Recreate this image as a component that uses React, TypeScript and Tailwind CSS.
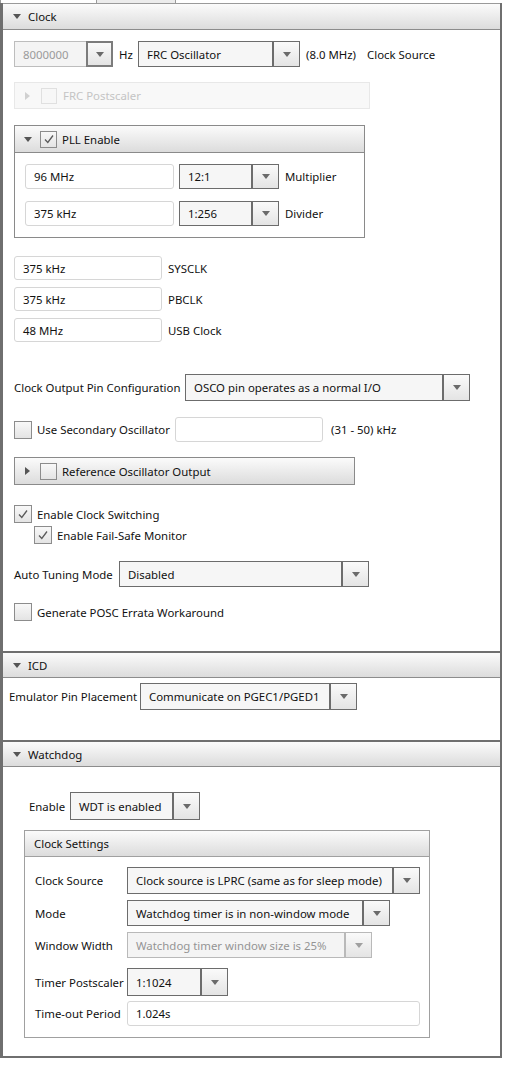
import React from "react";

function DownTri({ color = "#555" }: { color?: string }) {
  return (
    <svg width="8" height="5" viewBox="0 0 8 5">
      <polygon points="0,0 8,0 4,5" fill={color} />
    </svg>
  );
}

function RightTri({ color = "#555" }: { color?: string }) {
  return (
    <svg width="5" height="8" viewBox="0 0 5 8">
      <polygon points="0,0 5,4 0,8" fill={color} />
    </svg>
  );
}

function Check() {
  return (
    <svg width="14" height="14" viewBox="0 0 14 14">
      <path d="M3 7.5 L5.8 10.5 L11 3.5" stroke="#5a5a5a" strokeWidth="1.3" fill="none" />
    </svg>
  );
}

function CheckBox({ checked, size = "w-[18px] h-[18px]" }: { checked?: boolean; size?: string }) {
  return (
    <div className={`${size} shrink-0 border border-[#8c8c8c] bg-linear-to-b from-[#f8f8f8] to-[#e4e4e4] flex items-center justify-center`}>
      {checked && <Check />}
    </div>
  );
}

function Select({
  value,
  w,
  h = "h-[26px]",
  disabled,
}: {
  value: string;
  w: string;
  h?: string;
  disabled?: boolean;
}) {
  return (
    <div
      className={`${w} ${h} shrink-0 flex border ${
        disabled ? "border-[#b9b9b9] bg-[#f4f4f4] text-[#949494]" : "border-[#6c6c6c] bg-[#f6f6f6]"
      }`}
    >
      <div className="flex-1 flex items-center px-[8px] whitespace-nowrap overflow-hidden">{value}</div>
      <div
        className={`w-[27px] shrink-0 border-l-2 ${
          disabled ? "border-[#b9b9b9]" : "border-[#6c6c6c]"
        } bg-linear-to-b from-[#fafafa] to-[#e4e4e4] flex items-center justify-center`}
      >
        <DownTri color={disabled ? "#a0a0a0" : "#6a6a6a"} />
      </div>
    </div>
  );
}

function LockedCombo({ value, w }: { value: string; w: string }) {
  return (
    <div className={`${w} h-[26px] shrink-0 flex border border-[#bdbdbd] bg-[#f4f4f4]`}>
      <div className="flex-1 flex items-center px-[8px] text-[#9a9a9a]">{value}</div>
      <div className="w-[27px] shrink-0 border-2 border-[#7c7c7c] -m-px bg-linear-to-b from-[#fafafa] to-[#e4e4e4] flex items-center justify-center">
        <DownTri color="#6a6a6a" />
      </div>
    </div>
  );
}

function TextBox({ value, w, h = "h-[24px]" }: { value: string; w: string; h?: string }) {
  return (
    <div className={`${w} ${h} shrink-0 border border-[#d6d6d6] rounded-[3px] bg-white flex items-center px-[8px]`}>
      {value}
    </div>
  );
}

function SectionHeader({ title, thick }: { title: string; thick?: boolean }) {
  return (
    <div
      className={`h-[27px] shrink-0 flex items-center ${
        thick ? "border-t-2 border-t-[#6f6f6f]" : "border-t border-t-[#9a9a9a]"
      } border-b border-b-[#8c8c8c] bg-linear-to-b from-[#fbfbfb] to-[#dcdcdc]`}
    >
      <div className="ml-[10px] w-[12px] flex items-center">
        <DownTri />
      </div>
      <span className="ml-[3px]">{title}</span>
    </div>
  );
}

export default function App() {
  return (
    <div className="w-[506px] h-[1065px] overflow-hidden bg-white text-[11.4px] leading-[15px] text-[#111111] font-['Noto_Sans','Open_Sans',sans-serif]">
      {/* tab strip */}
      <div className="h-[3px] flex">
        <div className="w-[97px] border-x border-[#9a9a9a] bg-white" />
        <div className="w-[79px] border-r border-[#9a9a9a] bg-[#ececec]" />
      </div>

      <div className="w-[502px] h-[1055px] flex flex-col border-l-[3px] border-r-2 border-b-2 border-[#6f6f6f]">
        {/* Clock */}
        <SectionHeader title="Clock" />
        <div className="pl-[11px] pt-[11px] pb-[30px] flex flex-col">
          <div className="h-[26px] flex items-center">
            <LockedCombo value="8000000" w="w-[99px]" />
            <span className="ml-[6px] w-[13px]">Hz</span>
            <div className="ml-[6px]">
              <Select value="FRC Oscillator" w="w-[162px]" />
            </div>
            <span className="ml-[6px] w-[55px] whitespace-nowrap">(8.0 MHz)</span>
            <span className="ml-[6px] whitespace-nowrap">Clock Source</span>
          </div>

          <div className="mt-[15px] w-[356px] h-[27px] border border-[#e8e8e8] bg-[#f8f8f8] flex items-center">
            <div className="ml-[10px] w-[16px]">
              <RightTri color="#d0d0d0" />
            </div>
            <div className="w-[16px] h-[16px] border border-[#e0e0e0] bg-[#f7f7f7]" />
            <span className="ml-[6px] text-[#c4c4c4]">FRC Postscaler</span>
          </div>

          <div className="mt-[16px] w-[351px] border border-[#8a8a8a]">
            <div className="h-[27px] flex items-center border-b border-[#8a8a8a] bg-linear-to-b from-[#fbfbfb] to-[#dcdcdc]">
              <div className="ml-[9px] w-[16px]">
                <DownTri />
              </div>
              <CheckBox checked size="w-[17px] h-[17px]" />
              <span className="ml-[5px]">PLL Enable</span>
            </div>
            <div className="px-[10px] pt-[11px] pb-[11px] flex flex-col gap-[12px]">
              <div className="flex items-center">
                <TextBox value="96 MHz" w="w-[149px]" h="h-[25px]" />
                <div className="ml-[5px]">
                  <Select value="12:1" w="w-[100px]" h="h-[25px]" />
                </div>
                <span className="ml-[6px]">Multiplier</span>
              </div>
              <div className="flex items-center">
                <TextBox value="375 kHz" w="w-[149px]" h="h-[25px]" />
                <div className="ml-[5px]">
                  <Select value="1:256" w="w-[100px]" h="h-[25px]" />
                </div>
                <span className="ml-[6px]">Divider</span>
              </div>
            </div>
          </div>

          <div className="mt-[18px] flex flex-col gap-[7px]">
            {[
              ["375 kHz", "SYSCLK"],
              ["375 kHz", "PBCLK"],
              ["48 MHz", "USB Clock"],
            ].map(([v, l]) => (
              <div key={l} className="flex items-center">
                <TextBox value={v} w="w-[148px]" />
                <span className="ml-[6px]">{l}</span>
              </div>
            ))}
          </div>

          <div className="mt-[32px] flex items-center">
            <span className="w-[171px] whitespace-nowrap">Clock Output Pin Configuration</span>
            <Select value="OSCO pin operates as a normal I/O" w="w-[285px]" h="h-[27px]" />
          </div>

          <div className="mt-[16px] h-[25px] flex items-center">
            <CheckBox />
            <span className="ml-[5px] w-[138px] whitespace-nowrap">Use Secondary Oscillator</span>
            <TextBox value="" w="w-[148px]" h="h-[25px]" />
            <span className="ml-[8px]">(31 - 50) kHz</span>
          </div>

          <div className="mt-[15px] w-[341px] h-[28px] border border-[#8a8a8a] bg-linear-to-b from-[#fbfbfb] to-[#dcdcdc] flex items-center">
            <div className="ml-[10px] w-[15px]">
              <RightTri />
            </div>
            <CheckBox size="w-[17px] h-[17px]" />
            <span className="ml-[5px]">Reference Oscillator Output</span>
          </div>

          <div className="mt-[20px] flex items-center">
            <CheckBox checked />
            <span className="ml-[5px]">Enable Clock Switching</span>
          </div>
          <div className="mt-[3px] ml-[20px] flex items-center">
            <CheckBox checked />
            <span className="ml-[5px]">Enable Fail-Safe Monitor</span>
          </div>

          <div className="mt-[17px] flex items-center">
            <span className="w-[105px] whitespace-nowrap">Auto Tuning Mode</span>
            <Select value="Disabled" w="w-[250px]" />
          </div>

          <div className="mt-[16px] flex items-center">
            <CheckBox />
            <span className="ml-[5px]">Generate POSC Errata Workaround</span>
          </div>
        </div>

        {/* ICD */}
        <SectionHeader title="ICD" thick />
        <div className="pl-[6px] pt-[5px] pb-[30px]">
          <div className="flex items-center">
            <span className="w-[131px] whitespace-nowrap">Emulator Pin Placement</span>
            <Select value="Communicate on PGEC1/PGED1" w="w-[217px]" h="h-[27px]" />
          </div>
        </div>

        {/* Watchdog */}
        <SectionHeader title="Watchdog" thick />
        <div className="pt-[25px] flex flex-col">
          <div className="ml-[26px] flex items-center">
            <span className="w-[41px]">Enable</span>
            <Select value="WDT is enabled" w="w-[130px]" h="h-[28px]" />
          </div>

          <div className="mt-[10px] ml-[21px] w-[406px] border border-[#a0a0a0]">
            <div className="h-[26px] flex items-center border-b border-[#a0a0a0] bg-linear-to-b from-[#fbfbfb] to-[#dcdcdc] pl-[9px]">
              Clock Settings
            </div>
            <div className="pl-[10px] pt-[10px] pb-[11px] flex flex-col">
              <div className="flex items-center">
                <span className="w-[92px] whitespace-nowrap">Clock Source</span>
                <Select value="Clock source is LPRC (same as for sleep mode)" w="w-[293px]" h="h-[27px]" />
              </div>
              <div className="mt-[6px] flex items-center">
                <span className="w-[92px] whitespace-nowrap">Mode</span>
                <Select value="Watchdog timer is in non-window mode" w="w-[263px]" />
              </div>
              <div className="mt-[6px] flex items-center">
                <span className="w-[92px] whitespace-nowrap">Window Width</span>
                <Select value="Watchdog timer window size is 25%" w="w-[245px]" disabled />
              </div>
              <div className="mt-[10px] flex items-center">
                <span className="w-[92px] whitespace-nowrap">Timer Postscaler</span>
                <Select value="1:1024" w="w-[101px]" h="h-[28px]" />
              </div>
              <div className="mt-[5px] flex items-center">
                <span className="w-[92px] whitespace-nowrap">Time-out Period</span>
                <TextBox value="1.024s" w="w-[293px]" h="h-[25px]" />
              </div>
            </div>
          </div>
        </div>
      </div>
    </div>
  );
}
